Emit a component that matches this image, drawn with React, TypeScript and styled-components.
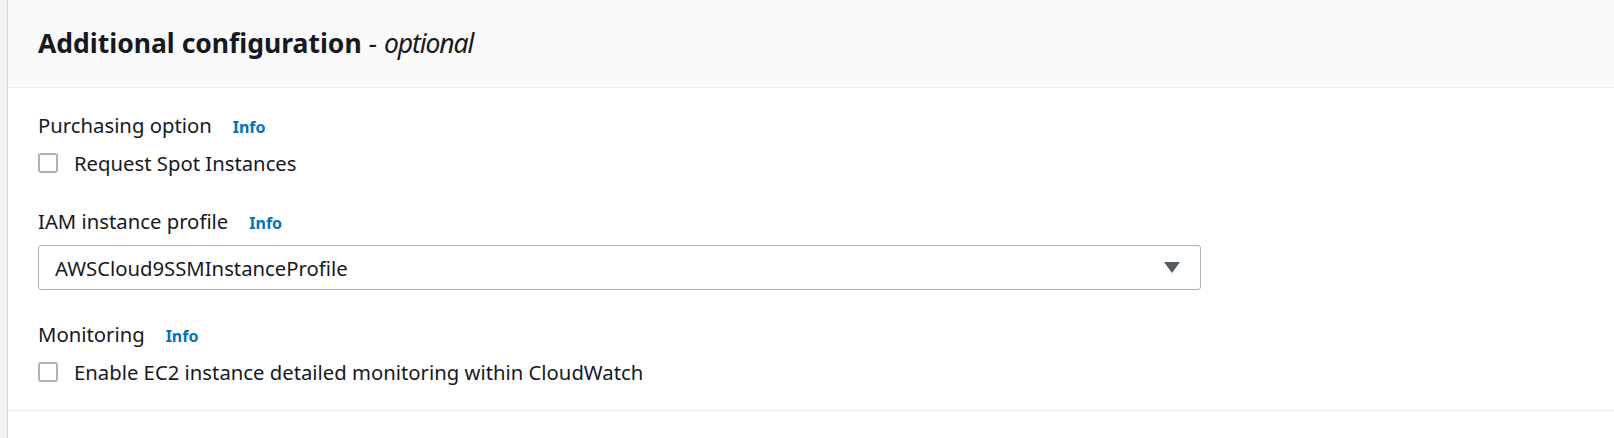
import React from "react";
import styled, { createGlobalStyle } from "styled-components";

const GlobalStyle = createGlobalStyle`
  html, body {
    margin: 0;
    padding: 0;
    background: #f2f3f3;
    font-family: "Noto Sans", "Open Sans", Arial, sans-serif;
    color: #16191f;
  }
  #root {
    min-height: 438px;
    display: flex;
  }
`;

const Page = styled.div`
  flex: 1;
  display: flex;
  padding-left: 7px;
  min-height: 438px;
`;

const Card = styled.section`
  flex: 1;
  display: flex;
  flex-direction: column;
  background: #ffffff;
  border-left: 1px solid #d5dbdb;
`;

const Header = styled.header`
  height: 88px;
  box-sizing: border-box;
  padding: 25px 30px 0;
  background: #fafafa;
  border-bottom: 1px solid #eaeded;
`;

const Title = styled.h2`
  margin: 0;
  font-size: 26.5px;
  line-height: 36px;
  font-weight: 700;
  color: #16191f;
  white-space: nowrap;
`;

const Suffix = styled.span`
  font-weight: 400;
`;

const Optional = styled.em`
  font-style: italic;
  font-weight: 400;
  letter-spacing: -1.1px;
`;

const Body = styled.div`
  display: flex;
  flex-direction: column;
  gap: 30px;
  padding: 23px 30px 24px;
  border-bottom: 1px solid #eaeded;
`;

const Field = styled.div`
  display: flex;
  flex-direction: column;
  gap: 10px;
`;

const Label = styled.div`
  display: flex;
  align-items: baseline;
  height: 28px;
  font-size: 20.3px;
  line-height: 28px;
  white-space: nowrap;
`;

const InfoLink = styled.a`
  margin-left: 21px;
  font-size: 16px;
  line-height: 16px;
  font-weight: 700;
  color: #0073bb;
  text-decoration: none;
  cursor: pointer;
`;

const CheckRow = styled.label`
  display: flex;
  align-items: center;
  gap: 16px;
  height: 28px;
  font-size: 20.3px;
  line-height: 28px;
  white-space: nowrap;
  cursor: pointer;
`;

const Box = styled.span`
  width: 20px;
  height: 20px;
  box-sizing: border-box;
  border: 2px solid #aab7b8;
  border-radius: 3px;
  background: #ffffff;
  flex: none;
`;

const Select = styled.div`
  width: 1163px;
  height: 45px;
  box-sizing: border-box;
  display: flex;
  align-items: center;
  justify-content: space-between;
  padding: 0 20px 0 16px;
  border: 1px solid #aab7b8;
  border-radius: 3px;
  background: #ffffff;
  font-size: 20.3px;
  line-height: 28px;
  white-space: nowrap;
`;

const Rest = styled.div`
  flex: 1;
`;

const Caret = () => (
  <svg width="16" height="11" viewBox="0 0 16 11" aria-hidden="true">
    <path d="M0 0 H16 L8 11 Z" fill="#545b64" />
  </svg>
);

const Info = () => <InfoLink>Info</InfoLink>;

export default function App() {
  return (
    <>
      <GlobalStyle />
      <Page>
        <Card>
          <Header>
            <Title>
              Additional configuration<Suffix> - </Suffix>
              <Optional>optional</Optional>
            </Title>
          </Header>
          <Body>
            <Field>
              <Label>
                Purchasing option
                <Info />
              </Label>
              <CheckRow>
                <Box />
                Request Spot Instances
              </CheckRow>
            </Field>
            <Field>
              <Label>
                IAM instance profile
                <Info />
              </Label>
              <Select>
                AWSCloud9SSMInstanceProfile
                <Caret />
              </Select>
            </Field>
            <Field>
              <Label>
                Monitoring
                <Info />
              </Label>
              <CheckRow>
                <Box />
                Enable EC2 instance detailed monitoring within CloudWatch
              </CheckRow>
            </Field>
          </Body>
          <Rest />
        </Card>
      </Page>
    </>
  );
}
